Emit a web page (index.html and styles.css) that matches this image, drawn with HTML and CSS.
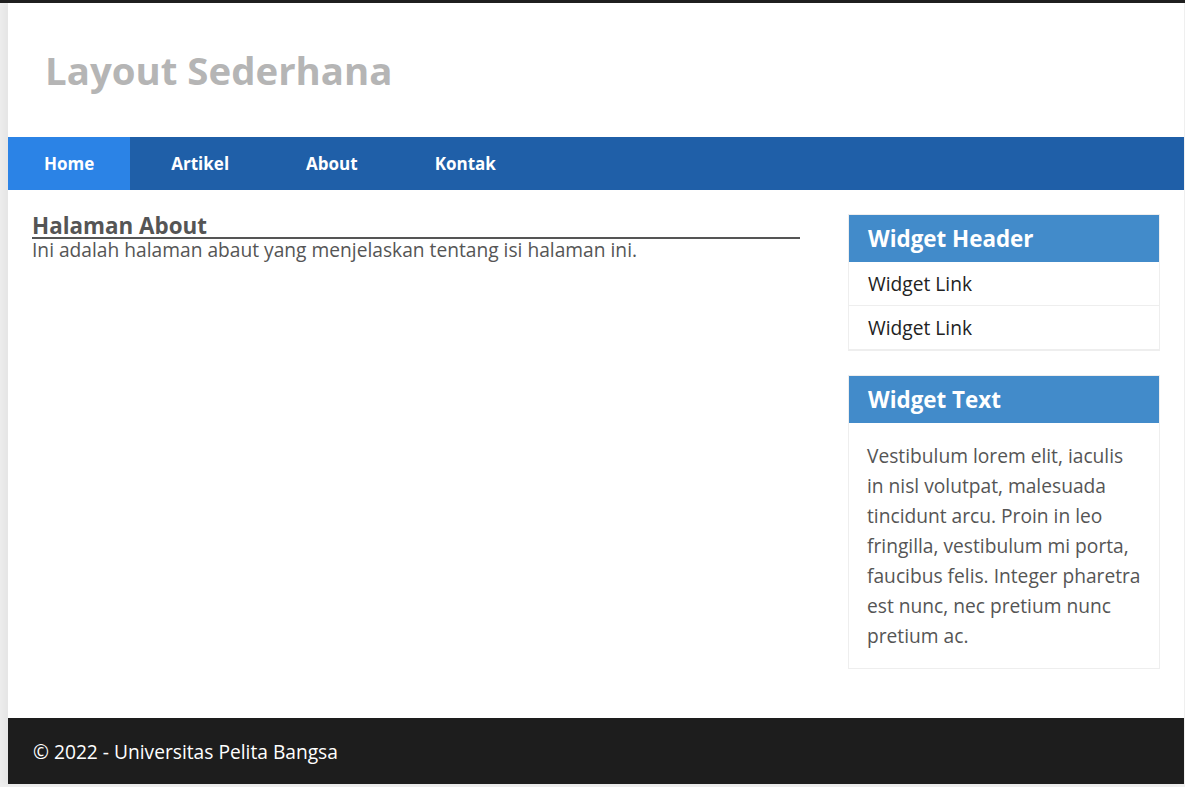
FILE: index.html
```html
<!DOCTYPE html>
<html lang="id">
<head>
<meta charset="utf-8">
<title>Layout Sederhana</title>
<link rel="stylesheet" href="styles.css">
</head>
<body>
<div class="container">
  <header class="site-header">
    <h1 class="site-title">Layout Sederhana</h1>
  </header>
  <nav class="nav">
    <a class="nav-item active" href="#">Home</a>
    <a class="nav-item" href="#">Artikel</a>
    <a class="nav-item" href="#">About</a>
    <a class="nav-item" href="#">Kontak</a>
  </nav>
  <div class="wrap">
    <main class="main">
      <h2 class="page-title">Halaman About</h2>
      <p class="page-text">Ini adalah halaman abaut yang menjelaskan tentang isi halaman ini.</p>
    </main>
    <aside class="sidebar">
      <div class="widget">
        <h3 class="widget-title">Widget Header</h3>
        <ul class="widget-list">
          <li><a href="#">Widget Link</a></li>
          <li><a href="#">Widget Link</a></li>
        </ul>
      </div>
      <div class="widget">
        <h3 class="widget-title">Widget Text</h3>
        <p class="widget-text">Vestibulum lorem elit, iaculis in nisl volutpat, malesuada tincidunt arcu. Proin in leo fringilla, vestibulum mi porta, faucibus felis. Integer pharetra est nunc, nec pretium nunc pretium ac.</p>
      </div>
    </aside>
  </div>
  <footer class="footer">
    <p>&copy; 2022 - Universitas Pelita Bangsa</p>
  </footer>
</div>
</body>
</html>
```
FILE: styles.css
```css
* { box-sizing: border-box; }
html, body { margin: 0; padding: 0; }
body {
  background: #efefef;
  border-top: 3px solid #1f1f1f;
  font-family: "Open Sans", "Noto Sans", sans-serif;
  color: #555;
  min-height: 787px;
}
.container {
  width: 1176px;
  margin-left: 8px;
  background: #fff;
  box-shadow: -6px 0 6px rgba(0,0,0,0.04);
}
.site-header {
  height: 134px;
  display: flex;
  align-items: center;
  padding: 0 37px;
}
.site-title {
  margin: 0;
  font-size: 38.4px;
  font-weight: 700;
  color: #b5b5b5;
}
.nav {
  display: flex;
  gap: 5px;
  height: 53px;
  background: #1f5fa8;
}
.nav-item {
  display: flex;
  align-items: center;
  padding: 0 36px;
  color: #fff;
  text-decoration: none;
  font-weight: 700;
  font-size: 17px;
}
.nav-item.active { background: #2b83e6; }
.wrap {
  display: flex;
  gap: 48px;
  padding: 24px 24px 49px;
}
.main { flex: 1; padding-top: 1px; }
.page-title {
  margin: 0;
  font-size: 22.4px;
  font-weight: 700;
  color: #555;
  line-height: 22px;
  border-bottom: 2px solid #555;
}
.page-text {
  margin: 0;
  font-size: 19.2px;
  line-height: 22px;
  color: #555;
}
.sidebar {
  width: 312px;
  display: flex;
  flex-direction: column;
  gap: 24px;
}
.widget {
  border: 1px solid #eee;
  border-bottom-width: 2px;
}
.widget:last-child { border-bottom-width: 1px; }
.widget-title {
  margin: 0;
  height: 47px;
  display: flex;
  align-items: center;
  padding: 0 19px;
  background: #428bca;
  color: #fff;
  font-size: 22.4px;
  font-weight: 700;
}
.widget-list { list-style: none; margin: 0; padding: 0; }
.widget-list li {
  height: 44px;
  display: flex;
  align-items: center;
  padding: 0 19px;
  border-bottom: 1px solid #eee;
}
.widget-list li:last-child { border-bottom: 0; height: 43px; }
.widget-list a {
  color: #222;
  text-decoration: none;
  font-size: 19.2px;
}
.widget-text {
  margin: 0;
  padding: 18px 18px 17px;
  font-size: 19.2px;
  line-height: 30px;
  color: #555;
}
.footer {
  height: 66px;
  background: #1d1d1d;
  display: flex;
  align-items: center;
  padding: 0 25px;
}
.footer p {
  margin: 0;
  color: #fff;
  font-size: 19.2px;
}
```
